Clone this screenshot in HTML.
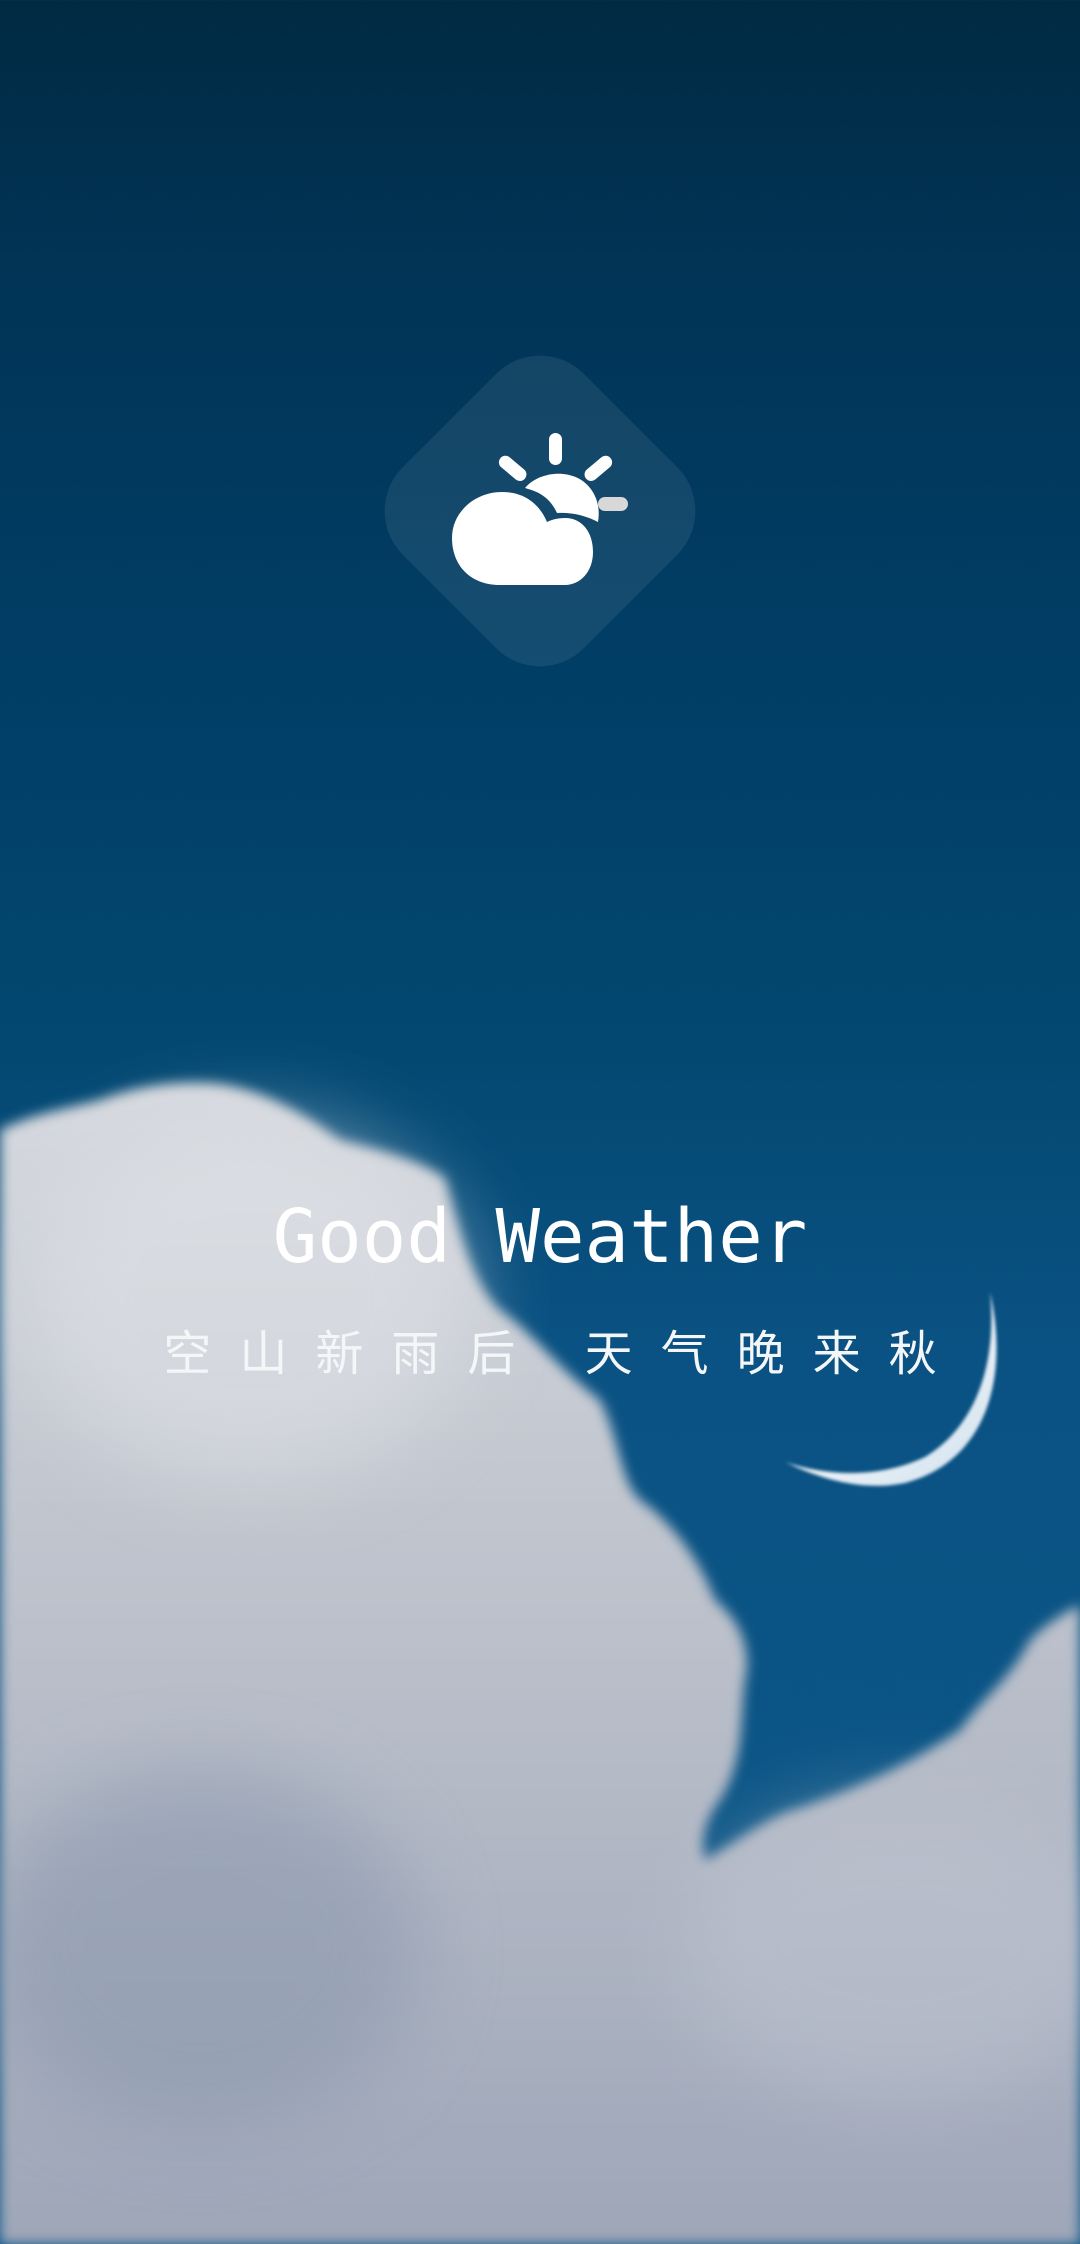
<!DOCTYPE html>
<html><head><meta charset="utf-8"><style>
html,body{margin:0;padding:0}
body{width:1080px;height:2244px;overflow:hidden;position:relative;background:linear-gradient(180deg,#012a42 0%,#013456 12%,#013e66 30%,#02476f 45%,#0a5283 60%,#0b5889 100%)}
.t{position:absolute;left:0;width:1080px;text-align:center;color:#fff}
</style></head><body>
<svg width="1080" height="2244" style="position:absolute;left:0;top:0">
<defs>
<filter id="b" x="-20%" y="-20%" width="140%" height="140%"><feGaussianBlur stdDeviation="6"/></filter>
<filter id="b2" x="-50%" y="-50%" width="200%" height="200%"><feGaussianBlur stdDeviation="40"/></filter>
<filter id="b3"><feGaussianBlur stdDeviation="1.5"/></filter>
<linearGradient id="cg" x1="0" y1="0" x2="0" y2="1"><stop offset="0" stop-color="#d6d9df"/><stop offset="0.4" stop-color="#bfc4cd"/><stop offset="1" stop-color="#9ea6b8"/></linearGradient>
<linearGradient id="mg" x1="0" y1="0" x2="1" y2="1"><stop offset="0" stop-color="#ffffff" stop-opacity="0.3"/><stop offset="0.5" stop-color="#eef3f8"/><stop offset="1" stop-color="#cfe0ee"/></linearGradient>
</defs>
<rect x="412" y="383" width="256" height="256" rx="62" transform="rotate(45 540 511)" fill="#ffffff" fill-opacity="0.08"/>
<path d="M990 1292 C1010 1380 985 1462 905 1483 C865 1491 825 1481 785 1462 C830 1477 880 1478 925 1457 C978 1425 997 1360 990 1292 Z" fill="url(#mg)" filter="url(#b3)"/>
<g filter="url(#b)">
<path d="M0 1130 C30 1115 60 1110 100 1100 C140 1085 180 1080 220 1084 C260 1090 300 1110 340 1140 C380 1150 420 1160 445 1178 C460 1230 470 1280 500 1310 C530 1330 560 1370 600 1400 C620 1440 620 1480 640 1500 C670 1520 700 1560 715 1600 C740 1620 752 1650 745 1680 C740 1720 745 1760 720 1800 C705 1820 700 1840 705 1860 C740 1840 770 1815 800 1808 C850 1790 900 1770 960 1730 C980 1700 1010 1680 1030 1640 C1050 1620 1070 1610 1080 1605 L1080 2244 L0 2244 Z" fill="url(#cg)"/>
</g>
<ellipse cx="200" cy="1950" rx="220" ry="180" fill="#8a97ad" opacity="0.55" filter="url(#b2)"/>
<ellipse cx="250" cy="1300" rx="220" ry="180" fill="#e2e4e8" opacity="0.5" filter="url(#b2)"/>
<ellipse cx="900" cy="1950" rx="220" ry="150" fill="#c5cad6" opacity="0.4" filter="url(#b2)"/>
<g fill="#fff">
<rect x="549" y="433" width="13" height="32" rx="6.5"/>
<rect x="497" y="462" width="32" height="13" rx="6.5" transform="rotate(40 513 468)"/>
<rect x="582" y="462" width="32" height="13" rx="6.5" transform="rotate(-40 598 468)"/>
<path d="M525 488 C540 470 575 468 590 488 C598 498 600 510 598 522 C585 515 570 512 557 513 C550 498 540 492 525 488 Z"/>
<path d="M500 585 C470 585 452 565 452 538 C452 512 475 492 502 492 C525 492 540 505 547 522 C551 520 557 518 565 518 C582 518 593 532 593 552 C593 572 580 585 565 585 Z"/>
</g>
<rect x="598" y="497" width="30" height="14" rx="7" fill="#d8d8d8"/>
</svg>
<div class="t" style="top:1192px;font:74px 'DejaVu Sans Mono','Liberation Mono',monospace;line-height:90px;">Good Weather</div>
<div class="t" style="top:1320px;left:24px;font:48px 'Liberation Sans','Noto Sans CJK SC',sans-serif;line-height:70px;letter-spacing:28px;color:#f4f6f8;white-space:pre">空山新雨后 天气晚来秋</div>
</body></html>
